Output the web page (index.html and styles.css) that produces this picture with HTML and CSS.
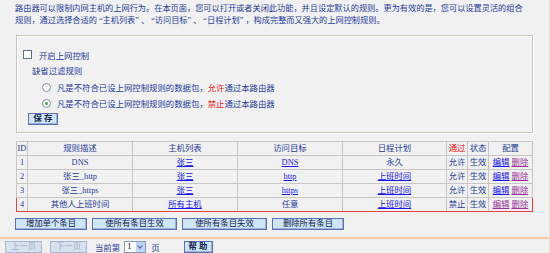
FILE: index.html
```html
<!DOCTYPE html>
<html lang="zh-CN">

<head>
  <meta charset="UTF-8">
  <title>上网控制规则管理</title>
  <link rel="stylesheet" href="styles.css">
</head>

<body>
  <div class="page">

    <p class="intro">路由器可以限制内网主机的上网行为。在本页面，您可以打开或者关闭此功能，并且设定默认的规则。更为有效的是，您可以设置灵活的组合<br>规则，通过选择合适的<span class="q">“主机列表”</span>、<span class="q">“访问目标”</span>、<span class="q">“日程计划”</span>，构成完整而又强大的上网控制规则。</p>

    <div class="panel">
      <div class="row check-row"><span class="checkbox"></span>开启上网控制</div>
      <div class="row sub">缺省过滤规则</div>
      <div class="row radio-row first"><span class="radio"></span>凡是不符合已设上网控制规则的数据包，<span class="red">允许</span>通过本路由器</div>
      <div class="row radio-row"><span class="radio checked"></span>凡是不符合已设上网控制规则的数据包，<span class="red">禁止</span>通过本路由器</div>
      <button class="btn save">保 存</button>
    </div>

    <table class="rules">
      <colgroup>
        <col style="width: 11px">
        <col style="width: 105px">
        <col style="width: 105px">
        <col style="width: 105px">
        <col style="width: 104px">
        <col style="width: 21px">
        <col style="width: 21px">
        <col>
      </colgroup>
      <tr>
        <th>ID</th>
        <th>规则描述</th>
        <th>主机列表</th>
        <th>访问目标</th>
        <th>日程计划</th>
        <th class="red">通过</th>
        <th>状态</th>
        <th>配置</th>
      </tr>
      <tr>
        <td>1</td>
        <td>DNS</td>
        <td><a href="#">张三</a></td>
        <td><a href="#">DNS</a></td>
        <td>永久</td>
        <td>允许</td>
        <td>生效</td>
        <td><a href="#">编辑</a> <a href="#" class="visited">删除</a></td>
      </tr>
      <tr>
        <td>2</td>
        <td>张三_http</td>
        <td><a href="#">张三</a></td>
        <td><a href="#">http</a></td>
        <td><a href="#">上班时间</a></td>
        <td>允许</td>
        <td>生效</td>
        <td><a href="#">编辑</a> <a href="#" class="visited">删除</a></td>
      </tr>
      <tr>
        <td>3</td>
        <td>张三_https</td>
        <td><a href="#">张三</a></td>
        <td><a href="#">https</a></td>
        <td><a href="#">上班时间</a></td>
        <td>允许</td>
        <td>生效</td>
        <td><a href="#">编辑</a> <a href="#" class="visited">删除</a></td>
      </tr>
      <tr class="marked">
        <td>4</td>
        <td>其他人上班时间</td>
        <td><a href="#">所有主机</a></td>
        <td>任意</td>
        <td><a href="#">上班时间</a></td>
        <td>禁止</td>
        <td>生效</td>
        <td><a href="#" class="visited">编辑</a> <a href="#" class="visited">删除</a></td>
      </tr>
    </table>

    <div class="actions">
      <button class="btn wide">增加单个条目</button>
      <button class="btn wider">使所有条目生效</button>
      <button class="btn wider">使所有条目失效</button>
      <button class="btn wide">删除所有条目</button>
    </div>

    <div class="pager">
      <button class="btn page-btn" disabled>上一页</button>
      <button class="btn page-btn" disabled>下一页</button>
      <span class="label">当前第</span>
      <span class="select"><span class="value">1</span><span class="arrow"></span></span>
      <span class="label">页</span>
      <button class="btn help">帮 助</button>
    </div>

  </div>
</body>

</html>
```

FILE: styles.css
```css
body {
  margin: 0;
  background-color: #f1f1f1;
  font-family: 'Liberation Serif', 'Noto Sans CJK SC', serif;
  font-size: 8.4px;
  color: #1e3c9c;
}

.page {
  width: 549px;
  height: 253px;
  border-right: 1px solid #f6dcc2;
}

.intro {
  margin: 0;
  padding: 3px 0 0 15px;
  font-size: 8.2px;
  line-height: 12px;
  white-space: nowrap;
}

/* the quotes are full width in the original font */
.intro .q {
  padding: 0 2px;
}

.red {
  color: #ee1111;
}

/* settings box */
.panel {
  margin: 8px 0 0 16px;
  padding: 11px 0 0 6px;
  box-sizing: border-box;
  width: 517px;
  height: 98px;
  border: 1px solid #c9c9bb;
  box-shadow: inset 1px 1px 0 #fff, 1px 1px 0 #fff;
}

.row {
  display: flex;
  align-items: center;
  height: 15px;
  white-space: nowrap;
}

.sub {
  padding-left: 9px;
}

.radio-row {
  height: 16px;
  padding-left: 19px;
}

.radio-row.first {
  margin-top: 2px;
}

.checkbox {
  width: 7px;
  height: 7px;
  margin-right: 7px;
  border: 1px solid #5d6f8f;
  background: #fff;
}

.radio {
  position: relative;
  width: 7px;
  height: 7px;
  margin-right: 6px;
  border: 1px solid #7c8aa6;
  border-radius: 50%;
  background: #fff;
}

.radio.checked::after {
  content: '';
  position: absolute;
  left: 2px;
  top: 2px;
  width: 3px;
  height: 3px;
  border-radius: 50%;
  background: #3caa3c;
}

/* buttons */
.btn {
  height: 12px;
  padding: 0;
  font-family: inherit;
  font-size: 8.4px;
  line-height: 8px;
  color: #14204a;
  background-color: #cde6f8;
  border: 1px solid #5b6fb9;
  box-shadow: inset -1px -1px 0 #9fb0dc;
  cursor: pointer;
}

.save {
  display: block;
  width: 30px;
  margin: 2px 0 0 5px;
  font-weight: bold;
}

/* rule table */
.rules {
  margin: 8px 0 0 16px;
  width: 517px;
  table-layout: fixed;
  border-collapse: collapse;
}

.rules th,
.rules td {
  height: 13px;
  padding: 0;
  border: 1px solid #c6c6c6;
  font-weight: normal;
  text-align: center;
  white-space: nowrap;
  line-height: 12px;
}

.rules a {
  color: #1515ee;
  text-decoration: underline;
}

.rules a.visited {
  color: #993399;
}

.marked td {
  border-top-color: #e84040;
  border-bottom-color: #e84040;
}

.marked td:first-child {
  border-left-color: #e84040;
}

.marked td:last-child {
  border-right-color: #e84040;
}

.actions {
  display: flex;
  gap: 5px;
  margin: 6px 0 0 15px;
}

.wide {
  width: 72px;
}

.wider {
  width: 85px;
}

/* pager */
.pager {
  display: flex;
  align-items: center;
  margin-top: 7px;
  padding: 2px 0 0 5px;
  border-top: 2px solid #f6c9a4;
}

.page-btn {
  width: 37px;
  margin-right: 8px;
  color: #a3aec8;
  background-color: #d6e3ef;
  border-color: #a6b6da;
  box-shadow: none;
}

.label {
  margin-right: 4px;
}

.select {
  display: flex;
  width: 22px;
  height: 12px;
  margin-right: 5px;
  box-sizing: border-box;
  border: 1px solid #7f9db9;
  background: #fff;
}

.select .value {
  flex: 1;
  padding-left: 2px;
  color: #000;
  line-height: 10px;
}

.select .arrow {
  position: relative;
  width: 9px;
  background: #c1d3fb;
}

.select .arrow::after {
  content: '';
  position: absolute;
  left: 2px;
  top: 2px;
  width: 3px;
  height: 3px;
  border-right: 1.5px solid #4d6185;
  border-bottom: 1.5px solid #4d6185;
  transform: rotate(45deg);
}

.help {
  width: 29px;
  margin-left: 20px;
  font-weight: bold;
}
```
